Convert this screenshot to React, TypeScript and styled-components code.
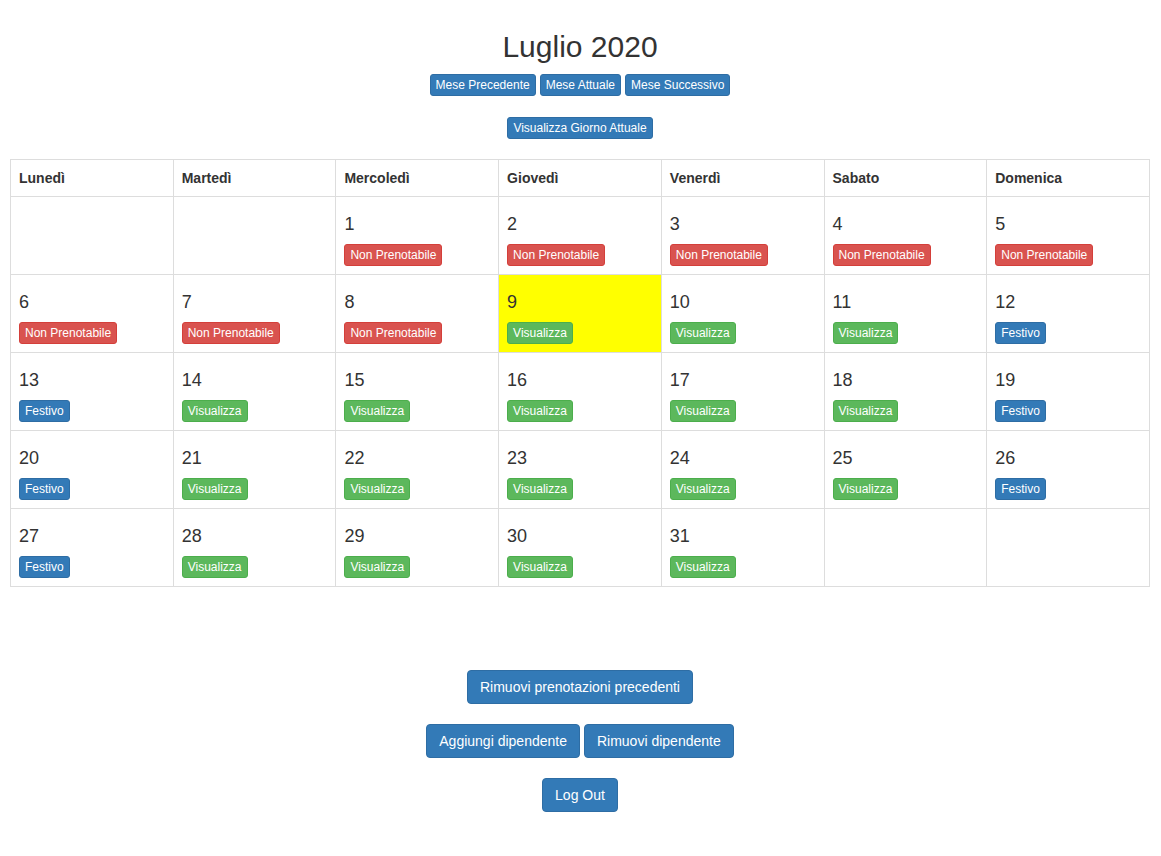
import React from "react";
import styled, { createGlobalStyle } from "styled-components";

const Global = createGlobalStyle`
  html, body { margin: 0; padding: 0; background: #fff; }
  body {
    font-family: "Liberation Sans", Arial, Helvetica, sans-serif;
    font-size: 14px;
    line-height: 1.42857;
    color: #333;
  }
  * { box-sizing: border-box; }
`;

const Page = styled.div`
  padding: 30px 11px 40px 10px;
  display: flex;
  flex-direction: column;
  align-items: center;
`;

const Title = styled.h2`
  margin: 0;
  font-size: 30px;
  font-weight: 500;
  line-height: 33px;
`;

const BtnRow = styled.div<{ $mt: number }>`
  display: flex;
  justify-content: center;
  gap: 4px;
  margin-top: ${(p) => p.$mt}px;
`;

type Variant = "primary" | "success" | "danger";
const colors: Record<Variant, { bg: string; border: string }> = {
  primary: { bg: "#337ab7", border: "#2e6da4" },
  success: { bg: "#5cb85c", border: "#4cae4c" },
  danger: { bg: "#d9534f", border: "#d43f3a" },
};

const Btn = styled.button<{ $v?: Variant; $size?: "xs" | "md" }>`
  font-family: inherit;
  color: #fff;
  background: ${(p) => colors[p.$v || "primary"].bg};
  border: 1px solid ${(p) => colors[p.$v || "primary"].border};
  cursor: pointer;
  white-space: nowrap;
  ${(p) =>
    p.$size === "md"
      ? `font-size: 14px; line-height: 20px; padding: 6px 12px; border-radius: 4px;`
      : `font-size: 12px; line-height: 18px; padding: 1px 5px; border-radius: 3px;`}
`;

const Table = styled.table`
  width: 100%;
  margin-top: 20px;
  border-collapse: collapse;
  table-layout: fixed;
`;

const Th = styled.th`
  border: 1px solid #ddd;
  padding: 8px;
  text-align: left;
  font-weight: bold;
  line-height: 20px;
`;

const Td = styled.td<{ $today?: boolean }>`
  border: 1px solid #ddd;
  padding: 8px;
  height: 78px;
  vertical-align: top;
  background: ${(p) => (p.$today ? "#ffff00" : "transparent")};
`;

const DayNum = styled.h4`
  margin: 10px 0 10px;
  font-size: 18px;
  font-weight: 500;
  line-height: 19px;
`;

const Bottom = styled.div`
  margin-top: 83px;
  display: flex;
  flex-direction: column;
  align-items: center;
  gap: 20px;
`;

const days = ["Lunedì", "Martedì", "Mercoledì", "Giovedì", "Venerdì", "Sabato", "Domenica"];

type Cell = { d: number; kind: "np" | "vis" | "fest" } | null;

const kindOf = (d: number): "np" | "vis" | "fest" => {
  if (d <= 8) return "np";
  if ([12, 13, 19, 20, 26, 27].includes(d)) return "fest";
  return "vis";
};

const cells: Cell[] = [null, null];
for (let d = 1; d <= 31; d++) cells.push({ d, kind: kindOf(d) });
while (cells.length % 7) cells.push(null);
const rows: Cell[][] = [];
for (let i = 0; i < cells.length; i += 7) rows.push(cells.slice(i, i + 7));

const label = { np: "Non Prenotabile", vis: "Visualizza", fest: "Festivo" };
const variant: Record<string, Variant> = { np: "danger", vis: "success", fest: "primary" };

export default function App() {
  return (
    <>
      <Global />
      <Page>
        <Title>Luglio 2020</Title>
        <BtnRow $mt={11}>
          <Btn>Mese Precedente</Btn>
          <Btn>Mese Attuale</Btn>
          <Btn>Mese Successivo</Btn>
        </BtnRow>
        <BtnRow $mt={21}>
          <Btn>Visualizza Giorno Attuale</Btn>
        </BtnRow>
        <Table>
          <thead>
            <tr>
              {days.map((d) => (
                <Th key={d}>{d}</Th>
              ))}
            </tr>
          </thead>
          <tbody>
            {rows.map((r, i) => (
              <tr key={i}>
                {r.map((c, j) => (
                  <Td key={j} $today={c?.d === 9}>
                    {c && (
                      <>
                        <DayNum>{c.d}</DayNum>
                        <Btn $v={variant[c.kind]}>{label[c.kind]}</Btn>
                      </>
                    )}
                  </Td>
                ))}
              </tr>
            ))}
          </tbody>
        </Table>
        <Bottom>
          <Btn $size="md">Rimuovi prenotazioni precedenti</Btn>
          <BtnRow $mt={0}>
            <Btn $size="md">Aggiungi dipendente</Btn>
            <Btn $size="md">Rimuovi dipendente</Btn>
          </BtnRow>
          <Btn $size="md">Log Out</Btn>
        </Bottom>
      </Page>
    </>
  );
}
